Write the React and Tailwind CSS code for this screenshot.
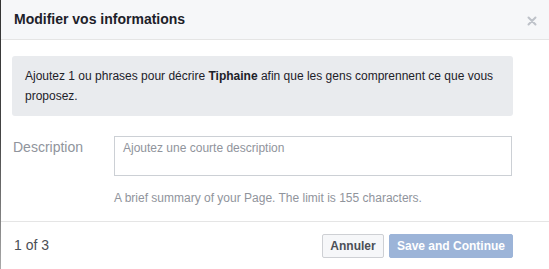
import React from 'react';

// Header with title and close glyph
const Header = () => (
  <div className="flex h-[40px] items-center justify-between border-b border-[#e5e5e5] bg-[#f6f7f9] pl-[13px] pr-[12px]">
    <h2 className="text-[14px] font-bold text-[#1d2129]">Modifier vos informations</h2>
    <svg width="10" height="10" viewBox="0 0 10 10" className="mt-[2px]">
      <path d="M1.5 1.5 L8.5 8.5 M8.5 1.5 L1.5 8.5" stroke="#bec2c9" strokeWidth="2" strokeLinecap="round" />
    </svg>
  </div>
);

const Notice = () => (
  <div className="mt-[16px] w-[501px] rounded-[3px] bg-[#e9ebee] px-[13px] py-[10px] text-[12px] leading-[20px] text-[#1d2129]">
    Ajoutez 1 ou phrases pour décrire <span className="font-bold">Tiphaine</span> afin que les gens comprennent ce que vous proposez.
  </div>
);

const DescriptionField = () => (
  <div className="mt-[20px] flex">
    <label className="w-[102px] pl-[1px] pt-[2px] text-[14px] leading-[18px] text-[#90949c]">Description</label>
    <div className="flex flex-col">
      <div className="h-[40px] w-[398px] border border-[#ccd0d5] px-[8px] pt-[3px] text-[12px] leading-[16px] text-[#90949c]">
        Ajoutez une courte description
      </div>
      <p className="mt-[14px] text-[12px] leading-[16px] text-[#90949c]">
        A brief summary of your Page. The limit is 155 characters.
      </p>
    </div>
  </div>
);

const Footer = () => (
  <div className="mt-[15px] flex h-[48px] items-center justify-between border-t border-[#e5e5e5] pl-[13px] pr-[36px]">
    <span className="text-[14px] text-[#4b4f56]">1 of 3</span>
    <div className="flex gap-[5px]">
      <button className="h-[24px] w-[62px] rounded-[2px] border border-[#ced0d4] bg-[#f6f7f9] text-[12px] font-bold text-[#4b4f56]">
        Annuler
      </button>
      <button className="h-[24px] w-[124px] rounded-[2px] border border-[#9cb4d8] bg-[#9cb4d8] text-[12px] font-bold text-white">
        Save and Continue
      </button>
    </div>
  </div>
);

export default function App() {
  return (
    <div className="flex h-[269px] w-[549px] bg-white font-['Liberation_Sans',Arial,sans-serif]">
      <div className="w-[1px] bg-gradient-to-b from-[#333] via-[#444] to-[#aaa]" />
      <div className="flex flex-1 flex-col">
        <Header />
        <div className="pl-[11px]">
          <Notice />
          <DescriptionField />
        </div>
        <Footer />
      </div>
    </div>
  );
}
